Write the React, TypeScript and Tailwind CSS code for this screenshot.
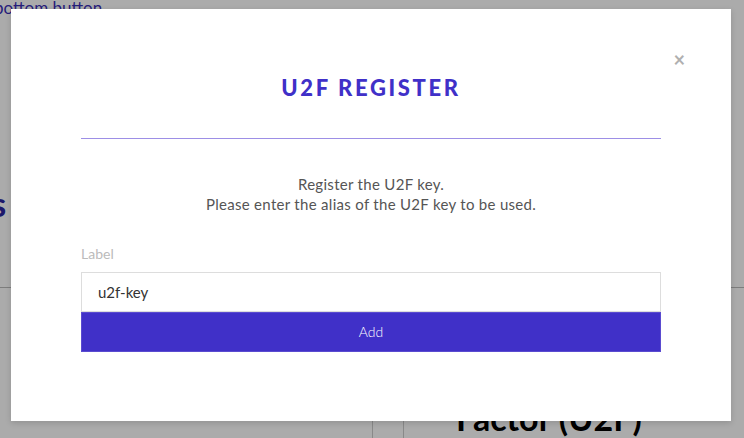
import React from "react";

function BackgroundPage() {
  return (
    <div className="h-[438px] w-[744px] overflow-hidden bg-white font-['Lato',sans-serif]">
      <div className="ml-[-6px] mt-[-5px] text-[17px] text-[#3a2fb8]">bottom button</div>
      <div className="mt-[166px] ml-[-66px] text-[34px] font-bold text-[#2b24a0] leading-none">Keys</div>
      <div className="mt-[66px] h-px bg-[#bbb]" />
      <div className="mt-[132px] flex h-[40px]">
        <div className="w-[373px] border-r border-[#ccc]" />
        <div className="w-[31px] border-r border-[#ccc]" />
        <div className="mt-[-19px] pl-[52px] text-[34px] font-bold leading-none text-black">Factor (U2F)</div>
      </div>
    </div>
  );
}

export default function App() {
  return (
    <div className="relative h-[438px] w-[744px] overflow-hidden">
      <BackgroundPage />
      <div className="absolute inset-0 bg-black/[0.33] pt-[9px] pl-[11px]">
        <div className="relative h-[412px] w-[720px] bg-white px-[70px] pt-[65px] font-['Lato',sans-serif] shadow-[0_2px_6px_rgba(0,0,0,0.15)]">
          <button className="absolute right-[46px] top-[40px] text-[20px] font-bold leading-none text-[#b0b0b0]">×</button>
          <h2 className="text-center text-[22px] font-black leading-[28px] tracking-[0.12em] text-[#4030c8]">
            U2F REGISTER
          </h2>
          <div className="mt-[36px] h-px bg-[#9d8fe6]" />
          <div className="mt-[35px] text-center text-[15px] leading-[20px] text-[#555] tracking-[0.02em]">
            <p>Register the U2F key.</p>
            <p>Please enter the alias of the U2F key to be used.</p>
          </div>
          <div className="mt-[30px] text-[14px] leading-[20px] text-[#bbb]">Label</div>
          <div className="mt-[8px] flex h-[40px] items-center border border-[#ddd] px-[16px] text-[15px] text-[#333]">
            u2f-key
          </div>
          <button className="flex h-[40px] w-full items-center justify-center border border-[#5a4bd0] bg-[#4030c8] pb-[1px] text-[14px] font-light text-white">
            Add
          </button>
        </div>
      </div>
    </div>
  );
}
